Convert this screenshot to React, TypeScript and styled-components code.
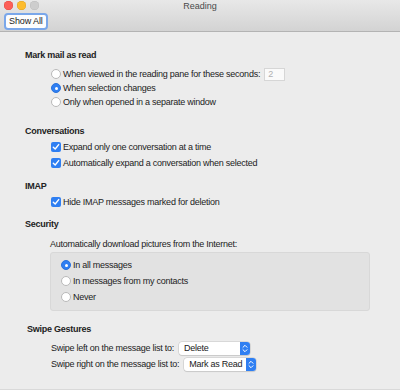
import React, { useState } from "react";
import styled, { createGlobalStyle } from "styled-components";

const Global = createGlobalStyle`
  html, body {
    margin: 0;
    padding: 0;
    background: #ececec;
  }
  body {
    font-family: "Liberation Sans", Arial, sans-serif;
    font-size: 9px;
    letter-spacing: -0.25px;
    color: #222;
  }
`;

const Window = styled.div`
  width: 400px;
  height: 390px;
  background: #ececec;
  overflow: hidden;
  box-sizing: border-box;
  border-bottom: 1px solid #d9d9d9;
`;

const TitleBar = styled.div`
  height: 32px;
  box-sizing: border-box;
  background: linear-gradient(#e8e8e8, #d3d3d3);
  border-bottom: 1px solid #b3b3b3;
  display: grid;
  grid-template-columns: 1fr auto 1fr;
  grid-template-rows: 12px 1fr;
`;

const Lights = styled.div`
  display: flex;
  gap: 4px;
  padding: 1px 0 0 4px;
`;

const Light = styled.span<{ $color: string; $edge: string }>`
  width: 9px;
  height: 9px;
  border-radius: 50%;
  background: ${(p) => p.$color};
  box-shadow: inset 0 0 0 0.5px ${(p) => p.$edge};
`;

const Title = styled.div`
  font-size: 9px;
  line-height: 13px;
  color: #4a4a4a;
  letter-spacing: 0;
`;

const ToolRow = styled.div`
  grid-column: 1 / 4;
  padding: 1px 0 0 4px;
`;

const ShowAll = styled.button`
  height: 17px;
  padding: 0 3px;
  box-sizing: border-box;
  border: 2px solid #7aa7ea;
  border-radius: 4px;
  background: #fdfdfd;
  font-family: inherit;
  font-size: 9px;
  letter-spacing: -0.1px;
  color: #222;
  line-height: 13px;
`;

const Content = styled.div`
  padding: 16px 0 0 25px;
`;

const Section = styled.div<{ $top: number }>`
  margin-top: ${(p) => p.$top}px;
`;

const Heading = styled.div<{ $indent?: number }>`
  font-weight: bold;
  font-size: 9px;
  line-height: 14px;
  padding-left: ${(p) => p.$indent ?? 0}px;
`;

const Options = styled.div<{ $top: number }>`
  margin-top: ${(p) => p.$top}px;
  padding-left: 26px;
  display: flex;
  flex-direction: column;
`;

const Row = styled.label<{ $h: number }>`
  display: flex;
  align-items: center;
  height: ${(p) => p.$h}px;
  gap: 2px;
  white-space: nowrap;
`;

const RadioDot = styled.span<{ $on?: boolean }>`
  width: 10px;
  height: 10px;
  box-sizing: border-box;
  border-radius: 50%;
  flex: none;
  display: flex;
  align-items: center;
  justify-content: center;
  background: ${(p) => (p.$on ? "#2f7ff2" : "#ffffff")};
  border: 1px solid ${(p) => (p.$on ? "#2a73dc" : "#b9b9b9")};
  &::after {
    content: "";
    width: 3px;
    height: 3px;
    border-radius: 50%;
    background: #fff;
    display: ${(p) => (p.$on ? "block" : "none")};
  }
`;

const CheckBox = styled.span`
  width: 10px;
  height: 10px;
  border-radius: 2px;
  background: #2f7ff2;
  flex: none;
  display: flex;
  align-items: center;
  justify-content: center;
`;

const SecondsInput = styled.span`
  width: 21px;
  height: 13px;
  box-sizing: border-box;
  margin-left: 2px;
  border: 1px solid #d6d6d6;
  background: #fafafa;
  color: #b0b0b0;
  font-size: 9px;
  line-height: 11px;
  padding-left: 3px;
`;

const Note = styled.div`
  line-height: 16px;
  margin-top: 5px;
  padding-left: 25px;
`;

const GroupBox = styled.div`
  margin: 0 0 0 25px;
  width: 320px;
  box-sizing: border-box;
  padding: 4px 0 5px 10px;
  background: #e2e2e2;
  border: 1px solid #d8d8d8;
  border-radius: 3px;
  display: flex;
  flex-direction: column;
`;

const SelectBox = styled.span<{ $w: number }>`
  display: inline-flex;
  align-items: center;
  justify-content: space-between;
  width: ${(p) => p.$w}px;
  height: 13px;
  margin-left: 3px;
  background: #fff;
  border-radius: 3px;
  box-shadow: 0 0 0 0.5px #c4c4c4, 0 1px 1px rgba(0, 0, 0, 0.12);
  overflow: hidden;
  padding-left: 5px;
  box-sizing: border-box;
`;

const Stepper = styled.span`
  width: 10px;
  height: 13px;
  flex: none;
  background: #2f7ff2;
  display: flex;
  align-items: center;
  justify-content: center;
`;

function Radio({ on, label, h = 14 }: { on?: boolean; label: string; h?: number }) {
  return (
    <Row $h={h}>
      <RadioDot $on={on} />
      {label}
    </Row>
  );
}

function Check({ label }: { label: string }) {
  return (
    <Row $h={16}>
      <CheckBox>
        <svg width="8" height="8" viewBox="0 0 8 8">
          <path d="M1.3 4.2 L3.2 6 L6.7 1.6" fill="none" stroke="#fff" strokeWidth="1.4" strokeLinecap="round" strokeLinejoin="round" />
        </svg>
      </CheckBox>
      {label}
    </Row>
  );
}

function Select({ value, w }: { value: string; w: number }) {
  return (
    <SelectBox $w={w}>
      {value}
      <Stepper>
        <svg width="6" height="9" viewBox="0 0 6 9">
          <path d="M1 3.3 L3 1.3 L5 3.3 M1 5.7 L3 7.7 L5 5.7" fill="none" stroke="#fff" strokeWidth="1" strokeLinecap="round" strokeLinejoin="round" />
        </svg>
      </Stepper>
    </SelectBox>
  );
}

export default function App() {
  const [seconds] = useState("2");

  return (
    <Window>
      <Global />
      <TitleBar>
        <Lights>
          <Light $color="#fc5f57" $edge="#e2463f" />
          <Light $color="#fdbc2e" $edge="#dea123" />
          <Light $color="#cdcdcd" $edge="#bcbcbc" />
        </Lights>
        <Title>Reading</Title>
        <div />
        <ToolRow>
          <ShowAll>Show All</ShowAll>
        </ToolRow>
      </TitleBar>
      <Content>
        <Section $top={0}>
          <Heading>Mark mail as read</Heading>
          <Options $top={5}>
            <Row $h={14}>
              <RadioDot />
              When viewed in the reading pane for these seconds:
              <SecondsInput>{seconds}</SecondsInput>
            </Row>
            <Radio on label="When selection changes" />
            <Radio label="Only when opened in a separate window" />
          </Options>
        </Section>

        <Section $top={15}>
          <Heading>Conversations</Heading>
          <Options $top={1}>
            <Check label="Expand only one conversation at a time" />
            <Check label="Automatically expand a conversation when selected" />
          </Options>
        </Section>

        <Section $top={8}>
          <Heading>IMAP</Heading>
          <Options $top={1}>
            <Check label="Hide IMAP messages marked for deletion" />
          </Options>
        </Section>

        <Section $top={7}>
          <Heading>Security</Heading>
          <Note>Automatically download pictures from the Internet:</Note>
          <GroupBox>
            <Radio on h={16} label="In all messages" />
            <Radio h={16} label="In messages from my contacts" />
            <Radio h={16} label="Never" />
          </GroupBox>
        </Section>

        <Section $top={11}>
          <Heading $indent={2}>Swipe Gestures</Heading>
          <Options $top={4}>
            <Row $h={16}>
              Swipe left on the message list to:
              <Select value="Delete" w={71} />
            </Row>
            <Row $h={16}>
              Swipe right on the message list to:
              <Select value="Mark as Read" w={72} />
            </Row>
          </Options>
        </Section>
      </Content>
    </Window>
  );
}
